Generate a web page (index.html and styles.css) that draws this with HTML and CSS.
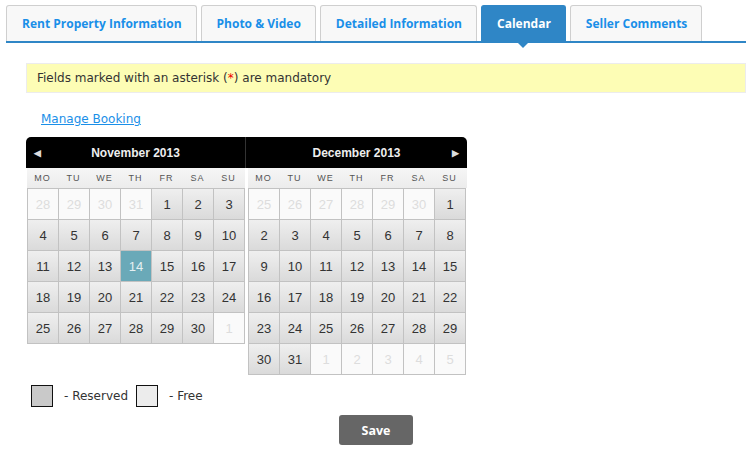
FILE: index.html
```html
<!DOCTYPE html>
<html>
<head>
<meta charset="utf-8">
<link rel="stylesheet" href="styles.css">
</head>
<body>
<div class="page">
  <div class="tabs">
    <div class="tab">Rent Property Information</div>
    <div class="tab">Photo &amp; Video</div>
    <div class="tab">Detailed Information</div>
    <div class="tab active">Calendar</div>
    <div class="tab">Seller Comments</div>
  </div>
  <div class="notice">Fields marked with an asterisk (<span class="req">*</span>) are mandatory</div>
  <a class="manage" href="#">Manage Booking</a>
  <div class="calendar">
    <div class="month left">
      <div class="mhead"><span class="nav prev">&#9664;</span>November 2013</div>
      <div class="dow"><span>MO</span><span>TU</span><span>WE</span><span>TH</span><span>FR</span><span>SA</span><span>SU</span></div>
      <div class="grid">
        <span class="other">28</span><span class="other">29</span><span class="other">30</span><span class="other">31</span><span>1</span><span>2</span><span>3</span>
        <span>4</span><span>5</span><span>6</span><span>7</span><span>8</span><span>9</span><span>10</span>
        <span>11</span><span>12</span><span>13</span><span class="today">14</span><span>15</span><span>16</span><span>17</span>
        <span>18</span><span>19</span><span>20</span><span>21</span><span>22</span><span>23</span><span>24</span>
        <span>25</span><span>26</span><span>27</span><span>28</span><span>29</span><span>30</span><span class="other">1</span>
      </div>
    </div>
    <div class="month right">
      <div class="mhead">December 2013<span class="nav next">&#9654;</span></div>
      <div class="dow"><span>MO</span><span>TU</span><span>WE</span><span>TH</span><span>FR</span><span>SA</span><span>SU</span></div>
      <div class="grid">
        <span class="other">25</span><span class="other">26</span><span class="other">27</span><span class="other">28</span><span class="other">29</span><span class="other">30</span><span>1</span>
        <span>2</span><span>3</span><span>4</span><span>5</span><span>6</span><span>7</span><span>8</span>
        <span>9</span><span>10</span><span>11</span><span>12</span><span>13</span><span>14</span><span>15</span>
        <span>16</span><span>17</span><span>18</span><span>19</span><span>20</span><span>21</span><span>22</span>
        <span>23</span><span>24</span><span>25</span><span>26</span><span>27</span><span>28</span><span>29</span>
        <span>30</span><span>31</span><span class="other">1</span><span class="other">2</span><span class="other">3</span><span class="other">4</span><span class="other">5</span>
      </div>
    </div>
  </div>
  <div class="legend">
    <span class="box reserved"></span><span class="ltext">- Reserved</span>
    <span class="box free"></span><span class="ltext">- Free</span>
  </div>
  <div class="actions"><button class="save">Save</button></div>
</div>
</body>
</html>
```
FILE: styles.css
```css
html, body { margin: 0; padding: 0; background: #fff; }
body { font-family: "DejaVu Sans", sans-serif; font-size: 12px; color: #333; }
.page { width: 752px; height: 460px; padding-top: 5px; box-sizing: border-box; }

.tabs {
  display: flex; gap: 4px;
  margin-left: 6px; width: 740px;
  border-bottom: 2px solid #2f86c6;
}
.tab {
  height: 35px; line-height: 35px;
  padding: 0 14px 0 15px;
  border: 1px solid #cfcfcf; border-bottom: none;
  border-radius: 3px 3px 0 0;
  background: #f8f8f8;
  color: #1a8fe8;
  font-family: "Open Sans", sans-serif; font-weight: 700; font-size: 12px;
  position: relative;
}
.tab.active { background: #2f86c6; border-color: #2f86c6; color: #fff; }
.tab.active::after {
  content: ""; position: absolute; left: 50%; bottom: -7px; margin-left: -5px;
  border-left: 5px solid transparent; border-right: 5px solid transparent;
  border-top: 5px solid #2f86c6;
}

.notice {
  margin: 20px 0 0 26px; height: 28px; line-height: 28px;
  background: #fdfdb5; border: 1px solid #ececec;
  padding-left: 10px; width: 708px;
}
.req { color: #e00; }

.manage {
  display: inline-block; margin: 19px 0 0 41px;
  color: #1a8fe8; text-decoration: underline; line-height: 14px;
}

.calendar {
  display: flex; margin: 11px 0 0 26px; width: 441px;
  font-family: "Liberation Sans", Arial, sans-serif;
}
.month { display: flex; flex-direction: column; }
.month.left { width: 220px; }
.month.right { width: 221px; }
.mhead {
  height: 31px; line-height: 32px; background: #000; color: #eee;
  font-weight: bold; font-size: 12px; text-align: center; position: relative;
}
.left .mhead { border-radius: 5px 0 0 0; border-right: 1px solid #333; }
.right .mhead { border-radius: 0 5px 0 0; }
.nav { position: absolute; top: 0; font-size: 9px; color: #ddd; }
.prev { left: 8px; }
.next { right: 8px; }

.dow {
  display: grid; grid-template-columns: repeat(7, 31px);
  height: 20px; line-height: 20px;
  background: linear-gradient(#f6f6f6, #ececec);
  font-size: 9px; color: #555; text-align: center; letter-spacing: 1px;
}
.left .dow { margin: 0 1px 0 1px; }
.right .dow { margin: 0 0 0 2px; }

.grid {
  display: grid; grid-template-columns: repeat(7, 31px); grid-auto-rows: 31px;
  border-left: 1px solid #c2c2c2; border-top: 1px solid #c2c2c2;
  width: 217px;
}
.left .grid { margin-left: 1px; }
.right .grid { margin-left: 2px; }
.grid span {
  display: flex; align-items: center; justify-content: center;
  border-right: 1px solid #c2c2c2; border-bottom: 1px solid #c2c2c2;
  background: linear-gradient(#efefef, #dadada);
  color: #333; font-size: 13px;
}
.grid span.other { background: #fafafa; color: #ddd; }
.grid span.today { background: #6aa9b8; color: #e6f0f2; }

.legend { display: flex; align-items: center; margin: 10px 0 0 31px; height: 22px; }
.box { width: 20px; height: 20px; border: 1px solid #111; }
.box.reserved { background: #c9c9c9; }
.box.free { background: #ececec; }
.ltext { margin: 0 8px 0 11px; }

.actions { display: flex; justify-content: center; margin-top: 8px; }
.save {
  width: 74px; height: 30px; border: none; border-radius: 3px;
  background: #666; color: #fff; font-family: "Open Sans", sans-serif;
  font-weight: bold; font-size: 12.5px;
}
```
